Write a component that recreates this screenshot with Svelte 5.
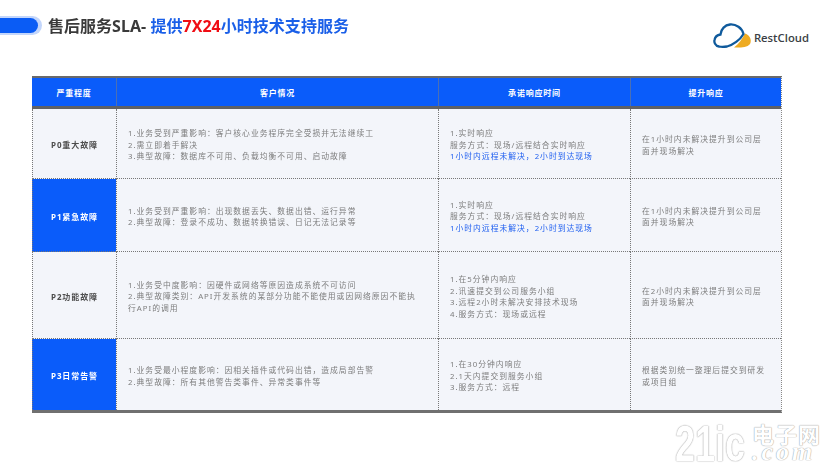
<script lang="ts">
  interface Line { text: string; accent?: boolean }
  interface Row {
    level: string;
    strong: boolean;
    height: number;
    impact: string[];
    response: Line[];
    escalate: string;
  }

  const realtime: Line[] = [
    { text: "1.实时响应" },
    { text: "服务方式：现场/远程结合实时响应" },
    { text: "1小时内远程未解决，2小时到达现场", accent: true },
  ];

  const rows: Row[] = [
    {
      level: "P0重大故障", strong: false, height: 70,
      impact: ["1.业务受到严重影响：客户核心业务程序完全受损并无法继续工", "2.需立即着手解决", "3.典型故障：数据库不可用、负载均衡不可用、启动故障"],
      response: realtime,
      escalate: "在1小时内未解决提升到公司层面并现场解决",
    },
    {
      level: "P1紧急故障", strong: true, height: 73,
      impact: ["1.业务受到严重影响：出现数据丢失、数据出错、运行异常", "2.典型故障：登录不成功、数据转换错误、日记无法记录等"],
      response: realtime,
      escalate: "在1小时内未解决提升到公司层面并现场解决",
    },
    {
      level: "P2功能故障", strong: false, height: 87,
      impact: ["1.业务受中度影响：因硬件或网络等原因造成系统不可访问", "2.典型故障类别：API开发系统的某部分功能不能使用或因网络原因不能执行API的调用"],
      response: [{ text: "1.在5分钟内响应" }, { text: "2.讯速提交到公司服务小组" }, { text: "3.远程2小时未解决安排技术现场" }, { text: "4.服务方式：现场或远程" }],
      escalate: "在2小时内未解决提升到公司层面并现场解决",
    },
    {
      level: "P3日常告警", strong: true, height: 71,
      impact: ["1.业务受最小程度影响：因相关插件或代码出错，造成局部告警", "2.典型故障：所有其他警告类事件、异常类事件等"],
      response: [{ text: "1.在30分钟内响应" }, { text: "2.1天内提交到服务小组" }, { text: "3.服务方式：远程" }],
      escalate: "根据类别统一整理后提交到研发或项目组",
    },
  ];
</script>

<div class="slide">
  <header class="top">
    <div class="title-wrap">
      <span class="pill"></span>
      <h1>售后服务SLA- <span class="blue">提供</span><span class="red">7X24</span><span class="blue">小时技术支持服务</span></h1>
    </div>
    <div class="logo">
      <svg width="38" height="26" viewBox="0 0 38 26" aria-hidden="true">
        <path d="M21 24.5 C26 24.5 34 25 37 21 C39 17 37 12 32 10.5 C29 16 26 21 21 24.5Z" fill="#eeab22" />
        <path d="M6 23.5 C2 23 1 19 1.5 17 C2 14 4.5 12 7.5 11.5 C8 6 12 2 17 1.5 C23 1 29 5 30.5 11 C27 17 20 22 14 23.5 C11 24 8 24 6 23.5Z" fill="none" stroke="#0f5a9c" stroke-width="2.3" />
      </svg>
      <span>RestCloud</span>
    </div>
  </header>

  <section class="table">
    <div class="th first">严重程度</div>
    <div class="th">客户情况</div>
    <div class="th">承诺响应时间</div>
    <div class="th">提升响应</div>
    <div class="head-rule"></div>

    {#each rows as row}
      <div class="td level" class:strong={row.strong} style="height: {row.height}px"><span>{row.level}</span></div>
      <div class="td body wide">
        {#each row.impact as line}<p>{line}</p>{/each}
      </div>
      <div class="td body">
        {#each row.response as line}<p class:accent={line.accent}>{line.text}</p>{/each}
      </div>
      <div class="td body">
        <p>{row.escalate}</p>
      </div>
    {/each}
  </section>

  <div class="watermark"><b>21ic</b><span class="wm-side"><i>电子网</i><em>.com</em></span></div>
</div>

<style>
  :global(body) { margin: 0; background: #fff; }
  .slide {
    position: relative; width: 830px; height: 468px; overflow: hidden; background: #fff;
    font-family: "Noto Sans", "Noto Sans CJK SC", sans-serif;
  }
  .top { display: flex; justify-content: space-between; height: 76px; }
  .title-wrap { display: flex; align-items: flex-start; gap: 10px; padding-top: 17px; }
  .pill {
    display: block; width: 38px; height: 15px; margin-top: 1px; background: #0a5cf5;
    border-radius: 0 8px 8px 0; box-shadow: 2px 0 0 2px #c3d6fb;
  }
  h1 {
    margin: 0; font-size: 16px; line-height: 18px; font-weight: 700; color: #3a3a3a;
    letter-spacing: .03px; filter: blur(.3px);
  }
  .blue { color: #1a5fe8; }
  .red { color: #f00d14; }
  .logo {
    display: flex; align-items: center; gap: 3px; height: 26px; margin: 23px 0 0 0; padding-right: 21px;
    font: 600 11.3px "Open Sans", sans-serif; color: #3b3f45;
  }
  .logo span { margin-top: 3px; }

  .table {
    display: grid; grid-template-columns: 84px 322px 192px 151px;
    width: 749px; margin-left: 32px;
    border-top: 2px solid #6a6a6a; border-bottom: 3px solid #707070; border-right: 1px dotted #888;
  }
  .th {
    height: 28px; background: #0a5cfa; color: #fff; display: flex; align-items: center; justify-content: center;
    font-size: 8px; font-weight: 700; letter-spacing: .8px; border-left: 1px solid #4a6fb5;
  }
  .th.first { border-left: none; }
  .head-rule { grid-column: 1 / -1; height: 3px; background: #5f6166; }
  .td {
    box-sizing: border-box; background: #f3f5fa; border-left: 1px dotted #777; border-bottom: 1px dotted #777;
    display: flex; flex-direction: column; justify-content: center;
  }
  .td:nth-last-child(-n + 4) { border-bottom: none; }
  .level {
    align-items: center; padding-top: 2px; font-size: 8px; font-weight: 700; letter-spacing: .9px; color: #4d4d4d;
  }
  .level span { filter: blur(.25px); }
  .level.strong { background: #0a5cfa; color: #fff; }
  .body {
    padding: 4px 12px 0 11px; color: #7d7d7d; font-size: 7.8px; letter-spacing: 1px; line-height: 11.5px;
  }
  .body.wide { padding-right: 18px; }
  .body p { margin: 0; filter: blur(.3px); }
  .body p.accent { color: #1f5ff0; }

  .watermark {
    position: absolute; left: 675px; top: 422px; display: flex; gap: 7px; align-items: flex-start;
    color: #fff; text-shadow: 0 0 1px #9a9a9a, 0 0 1px #b0b0b0;
  }
  .watermark b {
    display: block; margin-top: -7px; font: 700 36px/42px "Liberation Sans", sans-serif;
    transform: scaleY(1.4); transform-origin: left top;
  }
  .wm-side { display: flex; flex-direction: column; margin-top: -1px; }
  .wm-side i { font: 700 22px/24px "Noto Sans CJK SC", sans-serif; letter-spacing: 1px; font-style: normal; }
  .wm-side em { font: italic 700 26px/14px "Liberation Serif", serif; letter-spacing: 3px; }
</style>
